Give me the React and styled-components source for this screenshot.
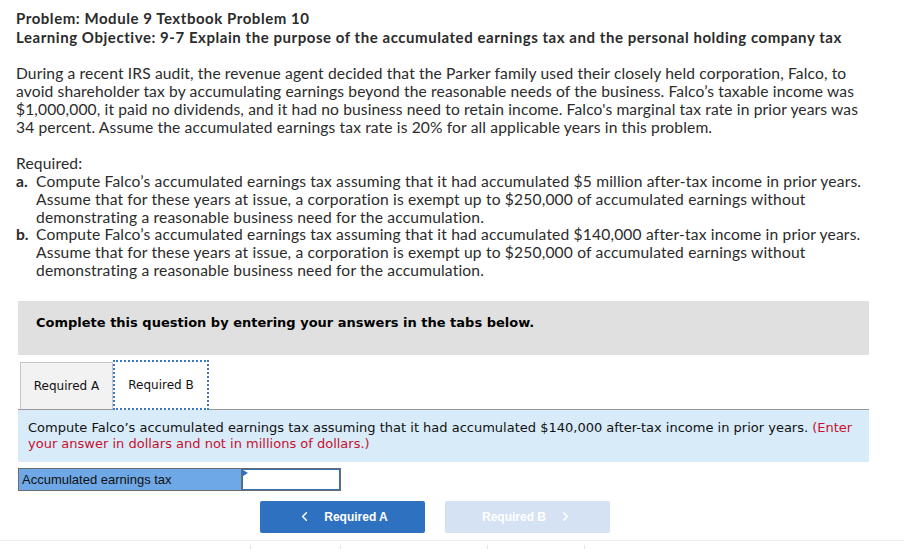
import styled, { createGlobalStyle } from "styled-components";
import { ChevronLeft, ChevronRight } from "lucide-react";

const GlobalStyle = createGlobalStyle`
  html, body {
    margin: 0;
    padding: 0;
    background: #fff;
  }
  body {
    font-family: "Lato", "Liberation Sans", sans-serif;
    color: #2b2b2b;
  }
`;

const Page = styled.div`
  width: 904px;
  height: 549px;
  overflow: hidden;
  padding: 9px 0 0 16px;
  box-sizing: border-box;
`;

const Heading = styled.div`
  font-weight: 700;
  font-size: 15px;
  letter-spacing: 0.55px;
  line-height: 19px;
`;

const Paragraph = styled.p`
  margin: 17px 0 0;
  width: 862px;
  font-size: 15.6px;
  letter-spacing: 0.13px;
  line-height: 18px;
`;

const RequiredLabel = styled.div`
  margin-top: 18px;
  font-size: 15.6px;
  letter-spacing: 0.15px;
  line-height: 18px;
`;

const List = styled.ol`
  margin: 1px 0 0;
  padding: 0;
  list-style: none;
  width: 860px;
`;

const Item = styled.li`
  display: flex;
  font-size: 15.6px;
  letter-spacing: 0.17px;
  line-height: 17.8px;
`;

const Letter = styled.span`
  flex: 0 0 20px;
  font-weight: 700;
  letter-spacing: 0;
`;

const Question = styled.div`
  margin: 21px 0 0 2px;
  width: 851px;
`;

const Banner = styled.div`
  height: 54px;
  box-sizing: border-box;
  padding: 14px 18px 0;
  background: #e0e0e0;
  font-family: "DejaVu Sans", Verdana, sans-serif;
  font-weight: 700;
  font-size: 13px;
  line-height: 16px;
  color: #000;
`;

const Tabs = styled.div`
  display: flex;
  align-items: flex-end;
  margin-top: 5px;
  padding-left: 2px;
  border-bottom: 1px solid #999;
`;

const Tab = styled.div`
  box-sizing: border-box;
  height: ${(p) => (p.active ? "50px" : "47px")};
  width: ${(p) => (p.active ? "96px" : "93px")};
  margin-bottom: ${(p) => (p.active ? "-1px" : "0")};
  display: flex;
  align-items: center;
  justify-content: center;
  font-family: "DejaVu Sans", Verdana, sans-serif;
  font-size: 12px;
  color: #111;
  background: ${(p) => (p.active ? "#fff" : "#f2f2f2")};
  border: ${(p) => (p.active ? "2px dotted #3b78c6" : "1px solid #c6c6c6")};
  border-bottom: ${(p) => (p.active ? "2px dotted #3b78c6" : "none")};
`;

const Prompt = styled.div`
  height: 52px;
  box-sizing: border-box;
  padding: 10px 10px 0;
  background: #d7ebf9;
  font-family: "DejaVu Sans", Verdana, sans-serif;
  font-size: 13px;
  line-height: 16px;
  color: #111;
`;

const Note = styled.span`
  color: #c8102e;
`;

const AnswerRow = styled.div`
  display: flex;
  margin-top: 6px;
  width: 323px;
  height: 23px;
  box-sizing: border-box;
  border: 1px solid #6c6c6c;
`;

const AnswerLabel = styled.div`
  flex: 0 0 223px;
  box-sizing: border-box;
  padding-left: 3px;
  background: #6fa8e6;
  border-right: 1px solid #6c6c6c;
  display: flex;
  align-items: center;
  font-family: "Liberation Sans", Arial, sans-serif;
  font-size: 13px;
  color: #111;
`;

const AnswerCell = styled.div`
  position: relative;
  flex: 1;
  border: 1px solid #2f6fc0;
  background: #fff;
`;

const Flag = styled.span`
  position: absolute;
  left: 0;
  top: 0;
  width: 0;
  height: 0;
  border-top: 3px solid transparent;
  border-bottom: 3px solid transparent;
  border-left: 5px solid #2f6fc0;
`;

const Nav = styled.div`
  display: flex;
  gap: 20px;
  margin-top: 10px;
  padding-left: 242px;
`;

const NavButton = styled.div`
  width: 165px;
  height: 32px;
  border-radius: 2px;
  display: flex;
  align-items: center;
  justify-content: center;
  gap: 12px;
  background: ${(p) => (p.disabled ? "#d4e2f3" : "#2f71c1")};
  color: #fff;
  font-family: "Liberation Sans", Arial, sans-serif;
  font-weight: 700;
  font-size: 12px;
`;

const Footer = styled.div`
  display: flex;
  margin: 7px 0 0 -16px;
  height: 10px;
  border-top: 1px solid #eeeeee;
`;

const Tick = styled.div`
  margin-left: ${(p) => p.x}px;
  margin-top: 4px;
  width: 1px;
  background: #e4e4e4;
`;

export default function App() {
  return (
    <>
      <GlobalStyle />
      <Page>
        <Heading>
          Problem: Module 9 Textbook Problem 10
          <br />
          Learning Objective: 9-7 Explain the purpose of the accumulated earnings tax and the personal holding company tax
        </Heading>
        <Paragraph>
          During a recent IRS audit, the revenue agent decided that the Parker family used their closely held corporation, Falco, to avoid shareholder tax by accumulating earnings beyond the reasonable needs of the business. Falco’s taxable income was $1,000,000, it paid no dividends, and it had no business need to retain income. Falco's marginal tax rate in prior years was 34 percent. Assume the accumulated earnings tax rate is 20% for all applicable years in this problem.
        </Paragraph>
        <RequiredLabel>Required:</RequiredLabel>
        <List>
          <Item>
            <Letter>a.</Letter>
            <span>
              Compute Falco’s accumulated earnings tax assuming that it had accumulated $5 million after-tax income in prior years. Assume that for these years at issue, a corporation is exempt up to $250,000 of accumulated earnings without demonstrating a reasonable business need for the accumulation.
            </span>
          </Item>
          <Item>
            <Letter>b.</Letter>
            <span>
              Compute Falco’s accumulated earnings tax assuming that it had accumulated $140,000 after-tax income in prior years. Assume that for these years at issue, a corporation is exempt up to $250,000 of accumulated earnings without demonstrating a reasonable business need for the accumulation.
            </span>
          </Item>
        </List>
        <Question>
          <Banner>Complete this question by entering your answers in the tabs below.</Banner>
          <Tabs>
            <Tab>Required A</Tab>
            <Tab active>Required B</Tab>
          </Tabs>
          <Prompt>
            Compute Falco’s accumulated earnings tax assuming that it had accumulated $140,000 after-tax income in prior years.{" "}
            <Note>(Enter your answer in dollars and not in millions of dollars.)</Note>
          </Prompt>
          <AnswerRow>
            <AnswerLabel>Accumulated earnings tax</AnswerLabel>
            <AnswerCell>
              <Flag />
            </AnswerCell>
          </AnswerRow>
          <Nav>
            <NavButton>
              <ChevronLeft size={15} strokeWidth={2.5} />
              <span>Required A</span>
            </NavButton>
            <NavButton disabled>
              <span>Required B</span>
              <ChevronRight size={15} strokeWidth={2.5} />
            </NavButton>
          </Nav>
        </Question>
        <Footer>
          <Tick x={250} />
          <Tick x={89} />
          <Tick x={146} />
          <Tick x={96} />
        </Footer>
      </Page>
    </>
  );
}
